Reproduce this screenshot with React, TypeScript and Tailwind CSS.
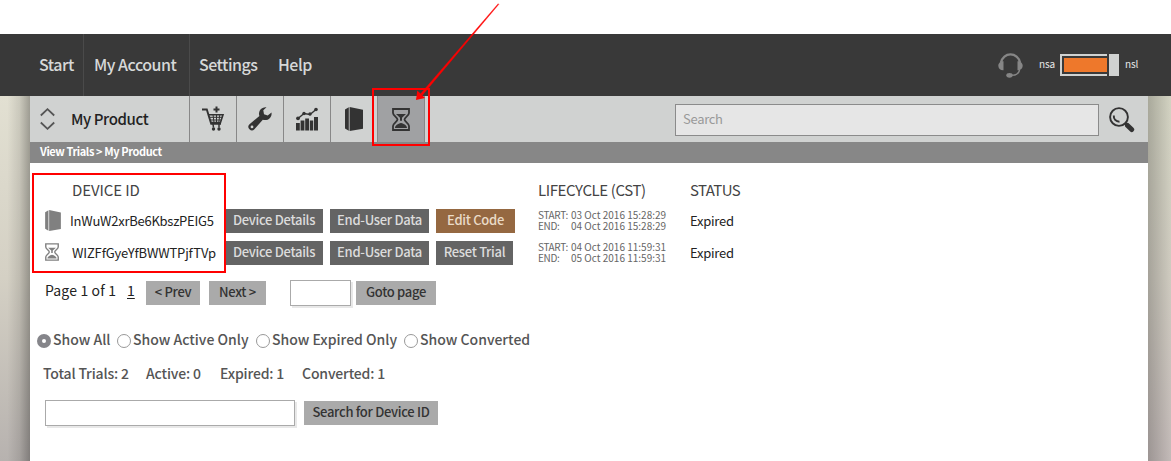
import type { ReactNode } from 'react';
import clsx from 'clsx';

type IconProps = { className?: string };

function CartIcon() {
  return (
    <svg width="24" height="26" viewBox="0 0 24 26" fill="none" stroke="#333" strokeWidth="1.6">
      <path d="M1 3.500h4.800l4.400 14.300h9.800" strokeWidth="1.900" />
      <path d="M7.500 8.800h14.500l-2.500 7.700H10" />
      <path d="M8 11.300h13.500M9 14h12M12 8.500l1 8M15.500 8.500v8M18.800 8.500l-1 8" strokeWidth="1" />
      <path d="M15.500 0.500v6M12.500 3.500h6" strokeWidth="2" />
      <path d="M12 18l0.500 3.500M18 18v3.500" strokeWidth="1.500" />
      <circle cx="12.500" cy="23" r="1.700" fill="#333" stroke="none" />
      <circle cx="18" cy="23" r="1.700" fill="#333" stroke="none" />
    </svg>
  );
}

function WrenchIcon() {
  return (
    <svg width="24" height="24" viewBox="0 0 24 24" fill="#333">
      <path
        fillRule="evenodd"
        d="M18.500 0.300A6.500 6.500 0 0 0 11.400 9L1.500 17.300a3.500 3.500 0 0 0 4.900 5L14.800 12.700A6.500 6.500 0 0 0 23.500 5.600L19.700 8.500L16 7.200L15.300 3.200ZM4 18.500a1.400 1.400 0 1 1 0 2.800a1.400 1.400 0 0 1 0-2.800Z"
      />
    </svg>
  );
}

function ChartIcon() {
  return (
    <svg width="22" height="24" viewBox="0 0 22 24" fill="#333">
      <path d="M0 16h3.800v7.500H0zM4.600 13.500h3.800v10H4.600zM9.200 11.500H13v12H9.200zM13.800 13.500h3.400v10h-3.400zM18 10h4v13.500h-4z" />
      <path d="M2 11.500L8 6.500L14 7.500L20 2.500" fill="none" stroke="#333" strokeWidth="1.400" />
      <circle cx="2" cy="11.300" r="1.900" />
      <circle cx="8" cy="6.500" r="1.700" />
      <circle cx="14" cy="7" r="1.700" />
      <circle cx="20" cy="2.500" r="1.800" />
    </svg>
  );
}

function BoxIcon({ className }: IconProps) {
  return (
    <svg viewBox="0 0 18 24" fill="currentColor" className={className}>
      <path d="M0 2.500L3.800 0.300v23.400L0 21.500zM4.600 0L18 2.800v19L4.600 24z" />
    </svg>
  );
}

function HourglassIcon({ className }: IconProps) {
  return (
    <svg viewBox="0 0 18 23" fill="none" stroke="currentColor" className={className}>
      <path d="M1 1h16v4c0 2.500-4.500 4.500-4.500 6.500S17 15.500 17 18v4H1v-4c0-2.500 4.500-4.500 4.500-6.500S1 7.500 1 5z" strokeWidth="1.800" />
      <path d="M4 6h10L10 9.700v3h-2v-3zM3 20c0-2.500 3-4.300 6-5c3 0.700 6 2.500 6 5z" fill="currentColor" stroke="none" />
    </svg>
  );
}

function HeadsetIcon() {
  return (
    <svg width="25" height="25" viewBox="0 0 25 25" fill="none" stroke="#868686">
      <path d="M3 9.500C4 4.500 8 1.300 12.500 1.300S21 4.500 22 9.500" strokeWidth="2.300" />
      <path d="M21.500 17c-0.500 3.500-3.500 5.300-8.500 5.300" strokeWidth="1.500" />
      <path d="M5.500 8.300v9C2.500 17.500 0.300 15.500 0.300 12.800S2.500 8.200 5.500 8.300zM19.500 8.300v9c3 0.200 5.200-1.800 5.200-4.500s-2.200-4.600-5.200-4.500z" fill="#868686" stroke="none" />
      <ellipse cx="11.500" cy="22.300" rx="3.200" ry="2.400" fill="#868686" stroke="none" />
    </svg>
  );
}

function MagnifierIcon() {
  return (
    <svg width="26" height="26" viewBox="0 0 26 26" fill="none" stroke="#333">
      <circle cx="10" cy="10" r="8.900" strokeWidth="1.900" />
      <path d="M4.800 8.500c-0.300 3.500 2 6.200 5.700 6.200" strokeWidth="1.900" />
      <path d="M15.800 15.800l2.500 2.500" strokeWidth="2.500" />
      <path d="M18.500 18.500l4.200 4" strokeWidth="5" strokeLinecap="round" />
    </svg>
  );
}

function NavItem({ children, className }: { children: ReactNode; className: string }) {
  return (
    <a className={clsx('flex h-full items-center pb-[2px] text-[16px] font-medium tracking-[-0.5px] whitespace-nowrap text-[#d6d8d8]', className)}>
      {children}
    </a>
  );
}

function Tool({ children, active }: { children: ReactNode; active?: boolean }) {
  return (
    <button className={clsx('flex h-full w-[47px] items-center justify-center border-r border-[#888]', active && 'bg-[#a0a1a3]')}>
      {children}
    </button>
  );
}

function Button({ children, className }: { children: ReactNode; className: string }) {
  return (
    <button className={clsx('flex h-6 shrink-0 items-center justify-center pb-[2px] text-[13px] leading-[22px] font-medium tracking-[-0.3px] whitespace-nowrap', className)}>
      {children}
    </button>
  );
}

const trials = [
  { id: 'InWuW2xrBe6KbszPEIG5', start: '03 Oct 2016 15:28:29', end: '04 Oct 2016 15:28:29', converted: true },
  { id: 'WIZFfGyeYfBWWTPjfTVp', start: '04 Oct 2016 11:59:31', end: '05 Oct 2016 11:59:31', converted: false },
];

const filters = [
  { label: 'Show All', width: 'w-[80px]' },
  { label: 'Show Active Only', width: 'w-[139px]' },
  { label: 'Show Expired Only', width: 'w-[148px]' },
  { label: 'Show Converted', width: 'w-[130px]' },
];

export default function App() {
  return (
    <div className="relative h-[461px] w-[1171px] overflow-hidden bg-white pt-[34px] font-['Noto_Sans_CJK_SC',sans-serif] leading-none text-[#222]">
      <header className="flex h-[62px] bg-[#393939]">
        <NavItem className="w-[84px] border-r border-[#4a4a4a] pl-[39px]">Start</NavItem>
        <NavItem className="w-[106px] border-r border-[#4a4a4a] pl-[10px] tracking-[-0.3px]">My Account</NavItem>
        <NavItem className="w-[78px] pl-[9px]">Settings</NavItem>
        <NavItem className="w-[60px] pl-[10px]">Help</NavItem>
        <div className="ml-auto flex items-center pr-[34px] text-[10px] text-[#e8e8e8]">
          <HeadsetIcon />
          <span className="ml-[16px] w-[21px] pb-[2px] tracking-[-0.2px]">nsa</span>
          <div className="flex h-[22px] w-[59px] items-stretch gap-[2px]">
            <div className="w-[47px] border-2 border-r-0 border-[#d0d2d1] py-[2px] pl-[2px]">
              <div className="h-full bg-[#ee782b]" />
            </div>
            <div className="w-[10px] bg-[#d0d2d1]" />
          </div>
          <span className="ml-[6px] w-[12px] pb-[2px] tracking-[-0.2px]">nsl</span>
        </div>
      </header>

      <div className="flex h-[365px]">
        <div className="w-[30px] bg-linear-to-b from-[#e2e0d2] via-[#d4d0c4] to-[#b7b2af]">
          <div className="h-full bg-linear-to-r from-transparent from-25% via-black/10 via-65% to-black/30" />
        </div>
        <main className="w-[1118px] bg-white">
          <div className="flex h-[46px] bg-[#d0d2d1]">
            <div className="flex w-[160px] items-center border-r border-[#888] pl-[10px]">
              <svg width="15" height="22" viewBox="0 0 15 22" fill="none" stroke="#555" strokeWidth="1.800">
                <path d="M0.800 7.500L7.500 1.200L14.200 7.500M0.800 14.500L7.500 20.800L14.200 14.500" />
              </svg>
              <span className="ml-4 pb-[2px] text-[15px] font-medium tracking-[-0.4px]">My Product</span>
            </div>
            <Tool><CartIcon /></Tool>
            <Tool><WrenchIcon /></Tool>
            <Tool><ChartIcon /></Tool>
            <Tool><BoxIcon className="h-6 w-[18px] text-[#333]" /></Tool>
            <Tool active><HourglassIcon className="h-[23px] w-[18px] text-[#333]" /></Tool>
            <div className="ml-auto flex items-center pt-[2px] pr-[13px]">
              <input
                placeholder="Search"
                className="h-8 w-[424px] border border-[#8b8b8b] bg-[#e6e6e6] px-[7px] pb-[3px] text-[13px] tracking-[-0.3px] placeholder:text-[#999]"
              />
              <span className="ml-[10px]"><MagnifierIcon /></span>
            </div>
          </div>
          <div className="flex h-[21px] items-center bg-[#878787] pb-[2px] pl-[10px] text-[11px] font-bold tracking-[-0.4px] text-white">
            View Trials &gt; My Product
          </div>

          <div className="flex h-[42px] items-end pb-[5px] text-[15px] tracking-[-0.4px] text-[#444]">
            <span className="w-[466px] pl-[42px] leading-5 tracking-[-0.1px]">DEVICE ID</span>
            <span className="w-[152px] pl-[42px] leading-5 whitespace-nowrap">LIFECYCLE (CST)</span>
            <span className="pl-[42px] leading-5 tracking-[-0.6px]">STATUS</span>
          </div>
          {trials.map((trial) => (
            <div key={trial.id} className="flex h-8 items-start pt-1 text-[13px] tracking-[-0.25px]">
              <span className="flex h-[22px] w-10 items-center pl-[15px] text-[#808080]">
                {trial.converted ? <BoxIcon className="h-[21px] w-4" /> : <HourglassIcon className="h-[18px] w-[14px]" />}
              </span>
              <span className={clsx('w-[155px] leading-[23px] whitespace-nowrap', !trial.converted && 'pl-[2px] tracking-[-0.15px]')}>{trial.id}</span>
              <Button className="w-[98px] bg-[#646464] text-[#dcdcdc]">Device Details</Button>
              <Button className="ml-[7px] w-[99px] bg-[#646464] text-[#dcdcdc]">End-User Data</Button>
              {trial.converted
                ? <Button className="ml-[7px] w-[79px] bg-[#956841] text-[#eadbc7]">Edit Code</Button>
                : <Button className="ml-[7px] mr-[2px] w-[77px] bg-[#646464] text-[#dcdcdc]">Reset Trial</Button>}
              <div className="ml-[23px] grid w-[152px] grid-cols-[33px_1fr] text-[10px] leading-[11px] tracking-normal whitespace-nowrap text-[#666]">
                <span className="tracking-[-0.35px]">START:</span><span>{trial.start}</span>
                <span className="tracking-[-0.35px]">END:</span><span>{trial.end}</span>
              </div>
              <span className="leading-6">Expired</span>
            </div>
          ))}

          <div className="mt-[11px] flex h-[26px] items-center pl-[15px] text-[14px]">
            <span className="w-[82px] pb-[6px] tracking-[0.15px]">Page 1 of 1</span>
            <a className="w-[19px] pb-[6px] underline underline-offset-2">1</a>
            <Button className="w-[54px] bg-[#aaa] text-[#333]">&lt; Prev</Button>
            <Button className="ml-[9px] w-[57px] bg-[#aaa] text-[#333]">Next &gt;</Button>
            <input className="ml-[24px] h-[26px] w-[61px] border border-[#aaa] shadow-[2px_2px_0_#e8e8e8]" />
            <Button className="ml-[5px] w-20 bg-[#aaa] text-[#333]">Goto page</Button>
          </div>

          <div className="mt-[22px] flex h-6 items-center pl-[7px] text-[14px] font-medium text-[#555]">
            {filters.map((filter, i) => (
              <label key={filter.label} className={clsx('flex items-center gap-[2px] whitespace-nowrap', filter.width)}>
                <span className={clsx('mt-px flex size-[14px] shrink-0 items-center justify-center rounded-full', i === 0 ? 'bg-[#85858a]' : 'border border-[#999]')}>
                  {i === 0 && <span className="size-1 rounded-full bg-white" />}
                </span>
                <span className="pb-[2px]">{filter.label}</span>
              </label>
            ))}
          </div>

          <div className="mt-[10px] flex h-6 items-center pb-[3px] pl-[13px] text-[14px] font-medium tracking-[-0.15px] whitespace-nowrap text-[#555]">
            <span className="w-[103px]">Total Trials: 2</span>
            <span className="w-[74px]">Active: 0</span>
            <span className="w-[82px]">Expired: 1</span>
            <span>Converted: 1</span>
          </div>

          <div className="mt-[14px] flex items-center pl-[15px]">
            <input className="h-[26px] w-[250px] border border-[#aaa] shadow-[2px_2px_0_#e8e8e8]" />
            <Button className="ml-[9px] w-[134px] bg-[#aaa] text-[#333]">Search for Device ID</Button>
          </div>
        </main>
        <div className="w-[23px] bg-linear-to-b from-[#d3d3c2] via-[#cfcbc0] to-[#c3bab8]">
          <div className="h-full bg-linear-to-r from-black/20 to-transparent" />
        </div>
      </div>

      {/* callouts */}
      <div className="absolute top-[88px] left-[372px] h-[58px] w-[58px] border-2 border-[#f00]" />
      <div className="absolute top-[173px] left-[32px] h-[100px] w-[194px] border-2 border-[#f00]" />
      <svg className="absolute top-0 left-[410px]" width="95" height="105" viewBox="0 0 95 105" fill="#f00">
        <path d="M88.200 3.700L88.800 4.300L12.300 95.300L10.700 93.700Z" stroke="#f00" strokeWidth="0.400" />
        <path d="M6 100L7.300 90.500L15 98Z" />
      </svg>
    </div>
  );
}
